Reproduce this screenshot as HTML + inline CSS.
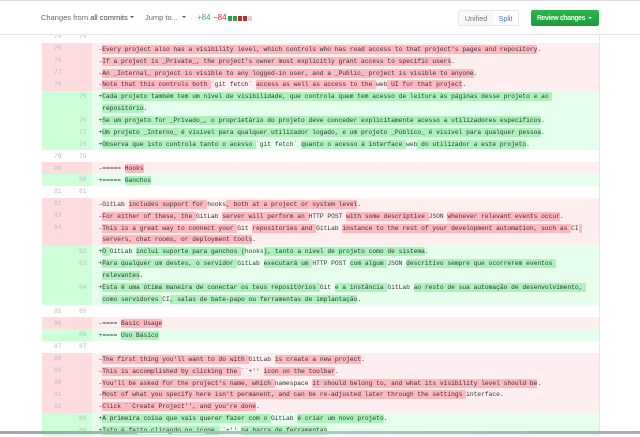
<!DOCTYPE html>
<html><head><meta charset="utf-8"><style>
html,body{margin:0;padding:0;background:#fff}
body{width:640px;height:434px;overflow:hidden;position:relative;font-family:"Liberation Sans",sans-serif}
#d{position:absolute;left:41.5px;top:31px;width:557px;font:6.25px/11.93px "Liberation Mono",monospace;color:#333;border-right:1px solid #e6e6e6;filter:blur(.3px)}
.r{height:11.93px;position:relative;white-space:pre}
.r i{position:absolute;font-style:normal;color:#bbb;width:20px;text-align:right;top:.4px}
.r i.a{left:0}.r i.b{left:25px}
.r u{position:absolute;left:0;top:0;bottom:0;width:50.5px;text-decoration:none}
.r s{position:absolute;left:57px;top:.8px;text-decoration:none}
.m{background:#ffeef0}.m u{background:#ffdce0}.m b{background:#fdb8c0}
.p{background:#e6ffed}.p u{background:#cdffd8}.p b{background:#acf2bd}
.r b{font-weight:normal;border-radius:1px;padding:1px 0}
#h{position:absolute;left:0;top:1px;width:640px;height:33px;background:#fff;border-bottom:1.5px solid #e6e6e6;z-index:2;filter:blur(.25px)}
#t{position:absolute;left:0;top:0;width:640px;height:1px;background:#ddd;z-index:3}
.h{position:absolute;white-space:pre;font-size:7.5px;line-height:12px;color:#666}
.q{position:absolute;top:15.3px;width:4.2px;height:4.6px}
#bb{position:absolute;left:0;top:431px;width:640px;height:3px;background:linear-gradient(90deg,#9aa7b3,#b6c2cc 50%,#a2afba);z-index:4}
</style></head><body>
<div id="t"></div>
<div id="h">
<span class="h" style="left:41px;top:10.5px">Changes from <span style="color:#444">all commits</span></span>
<span class="h" style="left:130px;top:15px;width:0;height:0;border:2px solid transparent;border-top:2.5px solid #555;border-bottom:0"></span>
<span class="h" style="left:145px;top:10.5px">Jump to...</span>
<span class="h" style="left:181.5px;top:15px;width:0;height:0;border:2px solid transparent;border-top:2.5px solid #555;border-bottom:0"></span>
<span class="h" style="left:197px;top:10.5px;font-size:8px;color:#4aa564">+84</span>
<span class="h" style="left:213px;top:10.5px;font-size:8px;color:#cb2431">−84</span>
<span class="q" style="left:228.3px;background:#28a745"></span>
<span class="q" style="left:233.3px;background:#28a745"></span>
<span class="q" style="left:238.3px;background:#cb2431"></span>
<span class="q" style="left:243.3px;background:#cb2431"></span>
<span class="q" style="left:248.3px;background:#d1d5da"></span>
<span style="position:absolute;left:458.3px;top:8.5px;width:33.5px;height:14.5px;border:1px solid #e3e6ea;border-radius:2px 0 0 2px;background:#f6f7f8;font-size:7.2px;line-height:15px;text-align:center;color:#777">Unified</span>
<span style="position:absolute;left:492.8px;top:8.5px;width:25.5px;height:14.5px;border:1px solid #e3e6ea;border-left:0;border-radius:0 2px 2px 0;background:#fff;font-size:7.2px;line-height:15px;text-align:center;color:#4078c0">Split</span>
<span style="position:absolute;left:530.7px;top:8.5px;width:68px;height:16.2px;border-radius:2px;background:linear-gradient(#2eb44f,#1f9a3c);font-size:6.9px;letter-spacing:-.4px;line-height:17.5px;color:#e8ffe8;font-weight:bold;text-indent:6.3px;white-space:pre">Review changes</span>
<span style="position:absolute;left:588px;top:15.5px;width:0;height:0;border:2px solid transparent;border-top:2.5px solid #e8ffe8;border-bottom:0"></span>
</div>
<div id="d">
<div class="r"><u></u><i class="a">74</i><i class="b">74</i></div>
<div class="r m"><u></u><i class="a">75</i><s>-<b>Every project also has a visibility level, which controls who has read access to that project's pages and repository</b>.</s></div>
<div class="r m"><u></u><i class="a">76</i><s>-<b>If a project is _Private_, the project's owner must explicitly grant access to specific users</b>.</s></div>
<div class="r m"><u></u><i class="a">77</i><s>-<b>An _Internal_ project is visible to any logged-in user, and a _Public_ project is visible to anyone</b>.</s></div>
<div class="r m"><u></u><i class="a">78</i><s>-<b>Note that this controls both </b>`git fetch` <b>access as well as access to the </b>web<b> UI for that project</b>.</s></div>
<div class="r p"><u></u><i class="b">75</i><s>+<b>Cada projeto também tem um nível de visibilidade, que controla quem tem acesso de leitura às páginas desse projeto e ao </b></s></div>
<div class="r p"><u></u><s> <b>repositório</b>.</s></div>
<div class="r p"><u></u><i class="b">76</i><s>+<b>Se um projeto for _Privado_, o proprietário do projeto deve conceder explicitamente acesso a utilizadores específicos</b>.</s></div>
<div class="r p"><u></u><i class="b">77</i><s>+<b>Um projeto _Interno_ é visível para qualquer utilizador logado, e um projeto _Público_ é visível para qualquer pessoa</b>.</s></div>
<div class="r p"><u></u><i class="b">78</i><s>+<b>Observa que isto controla tanto o acesso </b>`git fetch` <b>quanto o acesso à interface </b>web<b> do utilizador a este projeto</b>.</s></div>
<div class="r"><u></u><i class="a">79</i><i class="b">79</i></div>
<div class="r m"><u></u><i class="a">80</i><s>-===== <b>Hooks</b></s></div>
<div class="r p"><u></u><i class="b">80</i><s>+===== <b>Ganchos</b></s></div>
<div class="r"><u></u><i class="a">81</i><i class="b">81</i></div>
<div class="r m"><u></u><i class="a">82</i><s>-GitLab <b>includes support for </b>hooks<b>, both at a project or system level</b>.</s></div>
<div class="r m"><u></u><i class="a">83</i><s>-<b>For either of these, the </b>GitLab <b>server will perform an </b>HTTP POST <b>with some descriptive </b>JSON <b>whenever relevant events occur</b>.</s></div>
<div class="r m"><u></u><i class="a">84</i><s>-<b>This is a great way to connect your </b>Git <b>repositories and </b>GitLab <b>instance to the rest of your development automation, such as </b>CI<b> </b></s></div>
<div class="r m"><u></u><s> <b>servers, chat rooms, or deployment tools</b>.</s></div>
<div class="r p"><u></u><i class="b">82</i><s>+<b>O </b>GitLab <b>inclui suporte para ganchos (</b>hooks<b>), tanto a nível de projeto como de sistema</b>.</s></div>
<div class="r p"><u></u><i class="b">83</i><s>+<b>Para qualquer um destes, o servidor </b>GitLab <b>executará um </b>HTTP POST <b>com algum </b>JSON <b>descritivo sempre que ocorrerem eventos </b></s></div>
<div class="r p"><u></u><s> <b>relevantes</b>.</s></div>
<div class="r p"><u></u><i class="b">84</i><s>+<b>Esta é uma ótima maneira de conectar os teus repositórios </b>Git <b>e a instância </b>GitLab <b>ao resto de sua automação de desenvolvimento, </b></s></div>
<div class="r p"><u></u><s> <b>como servidores </b>CI<b>, salas de bate-papo ou ferramentas de implantação</b>.</s></div>
<div class="r"><u></u><i class="a">85</i><i class="b">85</i></div>
<div class="r m"><u></u><i class="a">86</i><s>-==== <b>Basic Usage</b></s></div>
<div class="r p"><u></u><i class="b">86</i><s>+==== <b>Uso Básico</b></s></div>
<div class="r"><u></u><i class="a">87</i><i class="b">87</i></div>
<div class="r m"><u></u><i class="a">88</i><s>-<b>The first thing you'll want to do with </b>GitLab <b>is create a new project</b>.</s></div>
<div class="r m"><u></u><i class="a">89</i><s>-<b>This is accomplished by clicking the </b>``+'' <b>icon on the toolbar</b>.</s></div>
<div class="r m"><u></u><i class="a">90</i><s>-<b>You'll be asked for the project's name, which </b>namespace <b>it should belong to, and what its visibility level should be</b>.</s></div>
<div class="r m"><u></u><i class="a">91</i><s>-<b>Most of what you specify here isn't permanent, and can be re-adjusted later through the settings </b>interface.</s></div>
<div class="r m"><u></u><i class="a">92</i><s>-<b>Click ``Create Project'', and you're done</b>.</s></div>
<div class="r p"><u></u><i class="b">88</i><s>+<b>A primeira coisa que vais querer fazer com o </b>GitLab <b>é criar um novo projeto</b>.</s></div>
<div class="r p"><u></u><i class="b">89</i><s>+<b>Isto é feito clicando no ícone </b>``+'' <b>na barra de ferramentas</b>.</s></div>
</div>
<div id="bb"></div>
<div style="position:absolute;left:137px;top:432.5px;width:31px;height:1.5px;background:#f2f2f2;z-index:5"></div>
<div style="position:absolute;left:172px;top:432.5px;width:33px;height:1.5px;background:#e8e8e8;z-index:5"></div>
</body></html>
